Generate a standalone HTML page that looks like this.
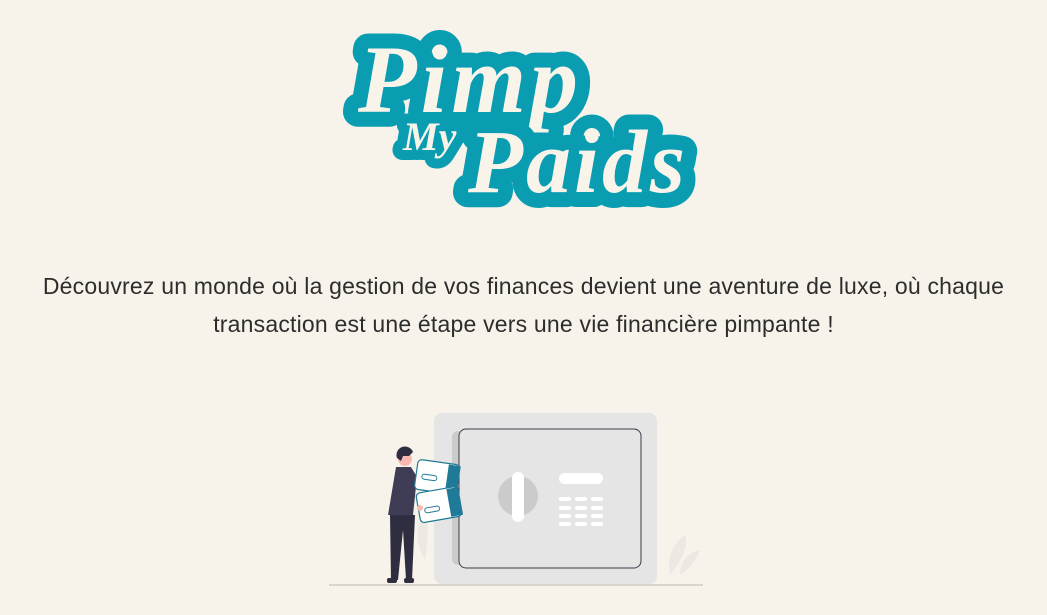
<!DOCTYPE html>
<html><head><meta charset="utf-8"><style>
html,body{margin:0;padding:0;background:#f7f3ea;width:1047px;height:615px;overflow:hidden}
p{position:absolute;left:0;top:267px;width:1047px;margin:0;text-align:center;font-family:"Liberation Sans",sans-serif;font-size:23px;letter-spacing:0.2px;line-height:38px;color:#2d2d2d}
svg{position:absolute;left:0;top:0}
</style></head><body>
<svg width="1047" height="615">
<g font-family="Liberation Serif" font-weight="bold" font-style="italic" fill="#f8f4ea" stroke="#0a9db2" stroke-linejoin="round" stroke-linecap="round" paint-order="stroke">
<text x="358" y="112" font-size="96" stroke-width="30" letter-spacing="4">Pimp</text>
<text x="403" y="150" font-size="40" stroke-width="20">My</text>
<text x="468" y="192" font-size="90" stroke-width="30" letter-spacing="3">Paids</text>
</g>
<line x1="329" y1="585" x2="703" y2="585" stroke="#cfcac2" stroke-width="1.5"/>
<path d="M425 560 q5-30 0-50 q-15 25 0 50z M670 575 q20-25 15-40 q-20 15-15 40z M680 575 q15-10 20-25 q-20 5-20 25z" fill="#ece8e2"/>
<rect x="434" y="413" width="223" height="171" rx="8" fill="#e5e5e5"/>
<rect x="452" y="431" width="20" height="134" rx="6" fill="#cbcbcb"/>
<rect x="459" y="429" width="182" height="139" rx="7" fill="#e5e5e5" stroke="#3c3a4a" stroke-width="1"/>
<circle cx="518" cy="496" r="20" fill="#cbcbcb"/>
<rect x="512" y="472" width="12" height="50" rx="6" fill="#fff"/>
<rect x="559" y="473" width="44" height="11" rx="5.5" fill="#fff"/>
<g fill="#fff">
<rect x="559" y="497" width="12" height="4" rx="2"/><rect x="575" y="497" width="12" height="4" rx="2"/><rect x="591" y="497" width="12" height="4" rx="2"/>
<rect x="559" y="506" width="12" height="4" rx="2"/><rect x="575" y="506" width="12" height="4" rx="2"/><rect x="591" y="506" width="12" height="4" rx="2"/>
<rect x="559" y="514" width="12" height="4" rx="2"/><rect x="575" y="514" width="12" height="4" rx="2"/><rect x="591" y="514" width="12" height="4" rx="2"/>
<rect x="559" y="522" width="12" height="4" rx="2"/><rect x="575" y="522" width="12" height="4" rx="2"/><rect x="591" y="522" width="12" height="4" rx="2"/>
</g>
<path d="M396 467 h15 l6 10 l-4 38 h-25 z" fill="#3f3d56"/>
<path d="M390 515 h25 l-3 65 h-6 l-3-50 l-5 50 h-7 z" fill="#2f2e41"/>
<rect x="387" y="578" width="10" height="5" rx="2" fill="#2f2e41"/><rect x="404" y="578" width="10" height="5" rx="2" fill="#2f2e41"/>
<circle cx="405" cy="459" r="7" fill="#f9b9b0"/>
<path d="M397 458 a8 8 0 0 1 16-6 l-4 4 h-6 l-2 5z" fill="#2f2e41"/>
<g transform="rotate(8 437 477)">
<rect x="416" y="462" width="42" height="30" rx="4" fill="#fff" stroke="#1e7a96" stroke-width="1.2"/>
<rect x="447" y="463" width="12" height="28" fill="#1e7a96"/>
<rect x="422" y="476" width="15" height="5" rx="2.5" fill="none" stroke="#1e7a96"/>
</g>
<g transform="rotate(-10 437 505)">
<rect x="418" y="490" width="42" height="30" rx="4" fill="#fff" stroke="#1e7a96" stroke-width="1.2"/>
<rect x="449" y="491" width="12" height="28" fill="#1e7a96"/>
<rect x="424" y="506" width="15" height="5" rx="2.5" fill="none" stroke="#1e7a96"/>
</g>
<circle cx="420" cy="508" r="3" fill="#f9b9b0"/>
</svg>
<p>Découvrez un monde où la gestion de vos finances devient une aventure de luxe, où chaque<br>transaction est une étape vers une vie financière pimpante !</p>
</body></html>
